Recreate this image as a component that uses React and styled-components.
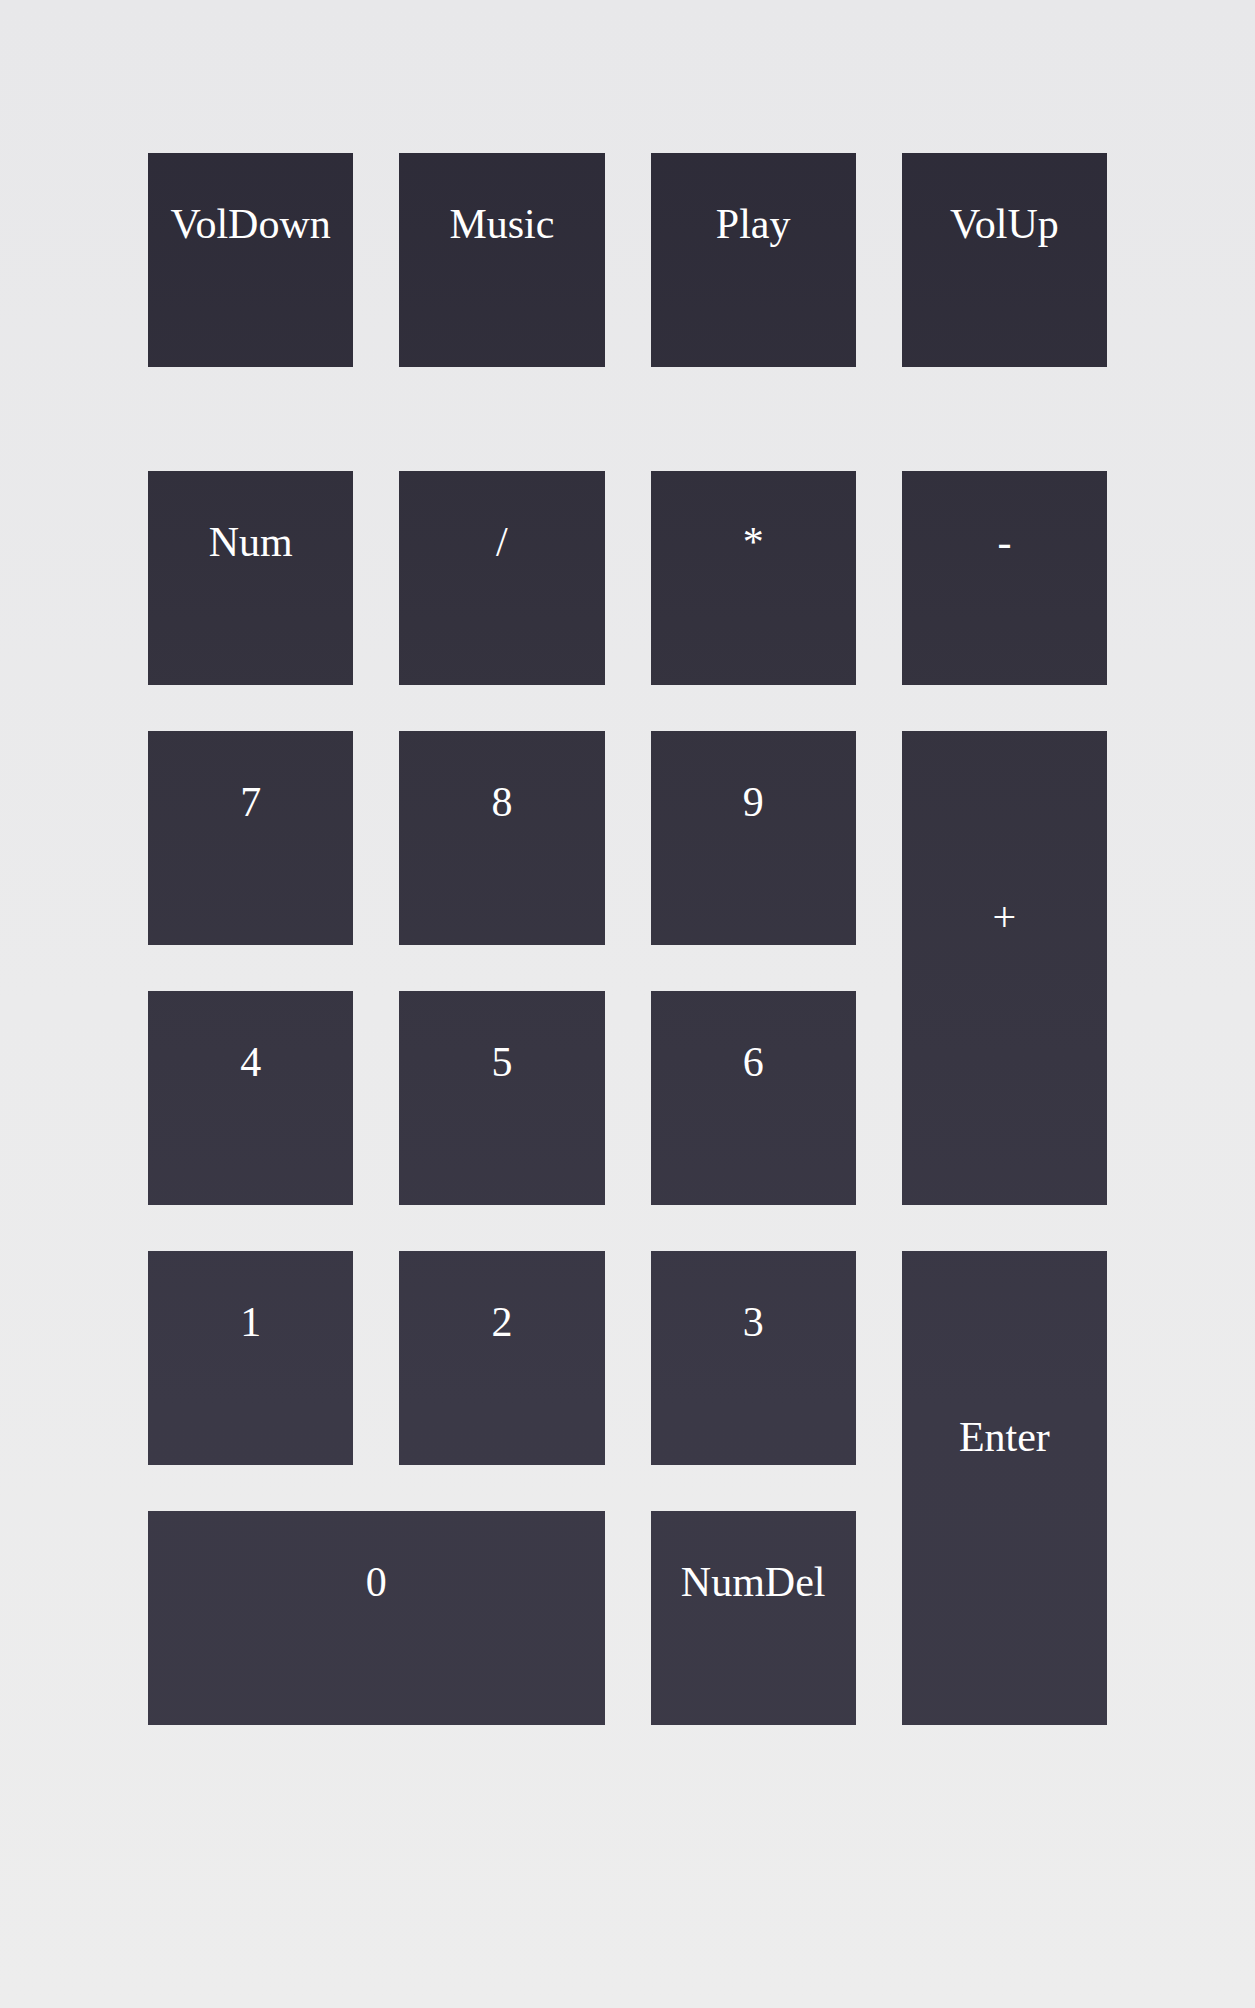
import React from 'react';
import styled, { createGlobalStyle } from 'styled-components';

const GlobalStyle = createGlobalStyle`
  html, body {
    margin: 0;
    padding: 0;
  }

  body {
    min-height: 2008px;
    background: linear-gradient(180deg, #e8e8ea 0%, #ebebec 50%, #ededed 100%);
    font-family: 'Liberation Serif', 'Times New Roman', serif;
  }
`;

const Board = styled.div`
  width: 959px;
  margin: 0 auto;
  padding-top: 153px;
  display: flex;
  flex-direction: column;
  gap: 104px;
`;

const Grid = styled.div`
  display: grid;
  grid-template-columns: repeat(4, 1fr);
  grid-auto-rows: 214px;
  column-gap: 46px;
  row-gap: 46px;
`;

const Key = styled.div`
  box-sizing: border-box;
  grid-column: span ${({ $wide }) => ($wide ? 2 : 1)};
  grid-row: span ${({ $tall }) => ($tall ? 2 : 1)};
  padding-top: ${({ $tall }) => ($tall ? '162px' : '47px')};
  background: linear-gradient(180deg, #2c2a37 0%, #35333f 35%, #3b3947 70%, #3c3a47 100%);
  background-attachment: fixed;
  color: #ffffff;
  font-size: 42px;
  line-height: normal;
  text-align: center;
  user-select: none;
`;

const media = ['VolDown', 'Music', 'Play', 'VolUp'];

const pad = [
  { label: 'Num' },
  { label: '/' },
  { label: '*' },
  { label: '-' },
  { label: '7' },
  { label: '8' },
  { label: '9' },
  { label: '+', tall: true },
  { label: '4' },
  { label: '5' },
  { label: '6' },
  { label: '1' },
  { label: '2' },
  { label: '3' },
  { label: 'Enter', tall: true },
  { label: '0', wide: true },
  { label: 'NumDel' },
];

export default function App() {
  return (
    <>
      <GlobalStyle />
      <Board>
        <Grid>
          {media.map((m) => (
            <Key key={m}>{m}</Key>
          ))}
        </Grid>
        <Grid>
          {pad.map((k) => (
            <Key key={k.label} $tall={k.tall} $wide={k.wide}>
              {k.label}
            </Key>
          ))}
        </Grid>
      </Board>
    </>
  );
}
